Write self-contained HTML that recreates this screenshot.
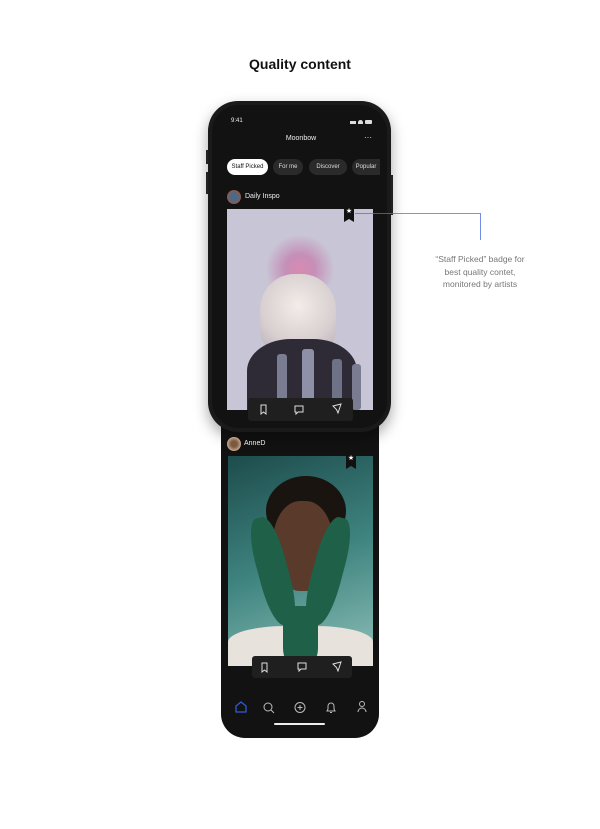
<!DOCTYPE html>
<html><head><meta charset="utf-8"><style>
*{margin:0;padding:0;box-sizing:border-box}
body{width:600px;height:829px;background:#fff;position:relative;overflow:hidden;font-family:"Liberation Sans",sans-serif}
.a{position:absolute}
h1{position:absolute;top:56px;width:600px;text-align:center;font-size:14px;font-weight:bold;color:#111}
.chip{position:absolute;top:159px;height:16px;border-radius:8px;background:#2a2a2a;color:#ddd;font-size:6px;line-height:16px;text-align:center}
.bar{position:absolute;background:#1f1f1f;border-radius:3px}
.note{position:absolute;left:420px;top:253px;width:120px;text-align:center;font-size:8.5px;line-height:12.5px;color:#777}
</style></head><body>
<h1>Quality content</h1>
<div class="a" style="left:221px;top:410px;width:158px;height:328px;background:#121212;border-radius:0 0 24px 24px"></div>
<div class="a" style="left:208px;top:101px;width:183px;height:331px;background:#1a1a1a;border-radius:30px;box-shadow:0 6px 14px rgba(0,0,0,.35)"></div>
<div class="a" style="left:212px;top:105px;width:175px;height:323px;background:#121212;border-radius:27px"></div>
<div class="a" style="left:206px;top:150px;width:2px;height:14px;background:#222"></div>
<div class="a" style="left:206px;top:172px;width:2px;height:22px;background:#222"></div>
<div class="a" style="left:391px;top:175px;width:2px;height:40px;background:#222"></div>
<div class="a" style="left:231px;top:118px;color:#eee;font-size:6px">9:41</div>
<div class="a" style="left:350px;top:120px;width:22px;height:4px"><div class="a" style="left:0;top:1px;width:6px;height:3px;background:#ddd"></div><div class="a" style="left:8px;top:0;width:5px;height:4px;border-radius:3px 3px 0 0;background:#ddd"></div><div class="a" style="left:15px;top:0;width:7px;height:4px;background:#ddd;border-radius:1px"></div></div>
<div class="a" style="left:270px;top:135px;width:62px;text-align:center;color:#eee;font-size:7px">Moonbow</div>
<div class="a" style="left:364px;top:133px;color:#eee;font-size:8px;letter-spacing:0">···</div>
<div class="chip" style="left:227px;width:41px;background:#fff;color:#111">Staff Picked</div>
<div class="chip" style="left:273px;width:30px">For me</div>
<div class="chip" style="left:309px;width:38px">Discover</div>
<div class="chip" style="left:352px;width:28px;border-radius:8px 0 0 8px">Popular</div>
<div class="a" style="left:227px;top:190px;width:14px;height:14px;border-radius:50%;background:radial-gradient(circle,#4a6a8a 30%,#8a5a50 70%)"></div>
<div class="a" style="left:245px;top:193px;color:#eee;font-size:7px">Daily Inspo</div>
<div class="a" style="left:227px;top:209px;width:146px;height:201px;background:#c8c6d6;overflow:hidden">
 <div class="a" style="left:38px;top:25px;width:70px;height:70px;border-radius:50%;background:radial-gradient(circle,#d98ab0 0%,#c58fb8 30%,rgba(200,198,214,0) 70%)"></div>
 <div class="a" style="left:33px;top:65px;width:76px;height:80px;border-radius:45% 45% 30% 30%;background:radial-gradient(circle at 50% 40%,#f3ece8,#d8cfd0 60%,#b4acb8)"></div>
 <div class="a" style="left:20px;top:130px;width:110px;height:80px;border-radius:40% 40% 0 0;background:#2e2a36"></div>
 <div class="a" style="left:50px;top:145px;width:10px;height:56px;background:#7a7d92;border-radius:3px"></div>
 <div class="a" style="left:75px;top:140px;width:12px;height:61px;background:#8d90a6;border-radius:3px"></div>
 <div class="a" style="left:105px;top:150px;width:10px;height:51px;background:#6e7286;border-radius:3px"></div>
 <div class="a" style="left:125px;top:155px;width:9px;height:46px;background:#7a7d92;border-radius:3px"></div>
</div>
<div class="a" style="left:344px;top:207px;width:10px;height:15px;background:#111;clip-path:polygon(0 0,100% 0,100% 100%,50% 80%,0 100%)"><div style="color:#fff;font-size:7px;text-align:center;line-height:9px">★</div></div>
<div class="bar" style="left:248px;top:398px;width:105px;height:23px"></div>
<svg class="a" style="left:248px;top:398px" width="105" height="23" fill="none" stroke="#ddd" stroke-width="1">
<path d="M13 7h5v9l-2.5-2-2.5 2z"/><path d="M47 8h8v6h-5l-2 2v-2h-1z"/><path d="M85 8l8-2-3 9-1.5-3.5z"/></svg>
<div class="a" style="left:227px;top:437px;width:14px;height:14px;border-radius:50%;background:radial-gradient(circle,#7a5a40 30%,#c8a890 70%)"></div>
<div class="a" style="left:244px;top:440px;color:#eee;font-size:7px">AnneD</div>
<div class="a" style="left:228px;top:456px;width:145px;height:210px;background:linear-gradient(160deg,#1d4c4c,#3f8480 50%,#8fc0b8);overflow:hidden">
 <div class="a" style="left:38px;top:20px;width:80px;height:70px;border-radius:50%;background:#1a1410"></div>
 <div class="a" style="left:45px;top:45px;width:60px;height:90px;border-radius:45%;background:#5a3a2a"></div>
 <div class="a" style="left:30px;top:60px;width:30px;height:110px;border-radius:40%;background:#1f6048;transform:rotate(-15deg)"></div>
 <div class="a" style="left:85px;top:60px;width:30px;height:110px;border-radius:40%;background:#1f6048;transform:rotate(15deg)"></div>
 <div class="a" style="left:0;top:170px;width:145px;height:40px;background:#e8e2dc;border-radius:40% 40% 0 0"></div>
 <div class="a" style="left:55px;top:150px;width:35px;height:60px;background:#1f6048;border-radius:30%"></div>
</div>
<div class="a" style="left:346px;top:454px;width:10px;height:15px;background:#111;clip-path:polygon(0 0,100% 0,100% 100%,50% 80%,0 100%)"><div style="color:#fff;font-size:7px;text-align:center;line-height:9px">★</div></div>
<div class="bar" style="left:252px;top:656px;width:100px;height:22px"></div>
<svg class="a" style="left:252px;top:656px" width="100" height="22" fill="none" stroke="#ddd" stroke-width="1">
<path d="M10 7h5v9l-2.5-2-2.5 2z"/><path d="M46 7h8v6h-5l-2 2v-2h-1z"/><path d="M81 8l8-2-3 9-1.5-3.5z"/></svg>
<svg class="a" style="left:230px;top:698px" width="140" height="20" fill="none" stroke="#bbb" stroke-width="1">
<path d="M6 14v-6l5-4 5 4v6z" stroke="#2f5bd8" stroke-width="1.3"/>
<circle cx="38" cy="9" r="4"/><path d="M41 12l3 3"/>
<circle cx="70" cy="9.5" r="5"/><path d="M70 7v5M67.5 9.5h5"/>
<path d="M97 13h8l-1-2v-3a3 3 0 0 0-6 0v3z M100 14.5h2"/>
<circle cx="132" cy="6" r="2.5"/><path d="M128 14a4 4 0 0 1 8 0"/></svg>
<div class="a" style="left:274px;top:723px;width:51px;height:2px;background:#eee;border-radius:1px"></div>
<svg class="a" style="left:0;top:0" width="600" height="300" fill="none" stroke="#4f6fe0" stroke-width="0.8"><path d="M355 213.5H480.5V240"/></svg>
<div class="note">“Staff Picked” badge for<br>best quality contet,<br>monitored by artists</div>
</body></html>
